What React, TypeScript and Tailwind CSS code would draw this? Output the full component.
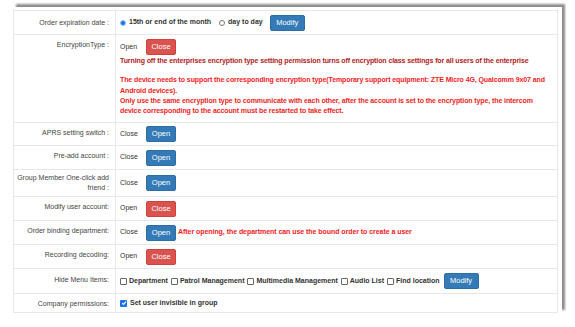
import React from 'react';

const font = { fontFamily: '"Liberation Sans", Arial, sans-serif' };

const Btn = ({ kind, children, w = 'w-[30px]' }: { kind: 'blue' | 'red'; children: React.ReactNode; w?: string }) => (
  <span
    className={`${w} h-[16px] inline-flex items-center justify-center rounded-[2px] text-white text-[7.5px] shrink-0 ${
      kind === 'blue' ? 'bg-[#337ab7] border border-[#2e6da4]' : 'bg-[#d9534f] border border-[#d43f3a]'
    }`}
  >
    {children}
  </span>
);

const Radio = ({ on }: { on?: boolean }) =>
  on ? (
    <span className="w-[6px] h-[6px] rounded-full bg-[#1a73e8] border border-[#9cc2f5] inline-block shrink-0" />
  ) : (
    <span className="w-[6px] h-[6px] rounded-full bg-white border border-[#777] inline-block shrink-0" />
  );

const Check = ({ on }: { on?: boolean }) =>
  on ? (
    <span className="w-[7px] h-[7px] rounded-[1px] bg-[#1a73e8] inline-flex items-center justify-center shrink-0">
      <svg width="6" height="6" viewBox="0 0 10 10">
        <path d="M2 5.2 L4.2 7.4 L8.2 2.6" stroke="white" strokeWidth="1.8" fill="none" />
      </svg>
    </span>
  ) : (
    <span className="w-[7px] h-[7px] rounded-[1px] bg-white border border-[#666] inline-block shrink-0" />
  );

const Row = ({
  label,
  h,
  lpt = 'pt-[6px]',
  children,
  top,
}: {
  label: React.ReactNode;
  h: string;
  lpt?: string;
  children: React.ReactNode;
  top?: boolean;
}) => (
  <div className={`flex border-b border-[#e8e8e8] ${h}`}>
    <div className={`w-[102px] shrink-0 border-r border-[#e8e8e8] text-right pr-[6px] text-[#444] leading-[10px] ${lpt}`}>
      {label}
    </div>
    <div className={`flex-1 pl-[4px] whitespace-nowrap ${top ? '' : 'flex items-center gap-[6px]'}`}>{children}</div>
  </div>
);

export default function App() {
  return (
    <div className="w-[575px] h-[327px] bg-white pl-[13px] pt-[7px] text-[7px]" style={font}>
      <div className="w-[549px] bg-white shadow-[3px_-3px_2px_rgba(0,0,0,0.45)] pt-[3px]">
        <div className="w-[545px] border-l border-t border-r border-[#e8e8e8] text-[#333]">
          <Row label="Order expiration date :" h="h-[24px]" lpt="pt-[7px]">
            <span className="flex items-center gap-[3px] font-bold">
              <Radio on />
              15th or end of the month
            </span>
            <span className="flex items-center gap-[3px] font-bold ml-[2px]">
              <Radio />
              day to day
            </span>
            <span className="ml-[1px]">
              <Btn kind="blue" w="w-[35px]">
                Modify
              </Btn>
            </span>
          </Row>
          <Row label="EncryptionType :" h="h-[88px]" lpt="pt-[5px]" top>
            <div className="flex items-center gap-[6px] mt-[4px]">
              <span className="w-[20px]">Open</span>
              <Btn kind="red">Close</Btn>
            </div>
            <div className="font-bold leading-[10.3px] mt-[1px] tracking-[-0.1px]">
              <div className="text-[#b01a1a]">
                Turning off the enterprises encryption type setting permission turns off encryption class settings for all users of the enterprise
              </div>
              <div className="h-[9px]" />
              <div className="text-[#f01c1c]">
                The device needs to support the corresponding encryption type(Temporary support equipment: ZTE Micro 4G, Qualcomm 9x07 and
                <br />
                Android devices).
              </div>
              <div className="text-[#f01c1c]">
                Only use the same encryption type to communicate with each other, after the account is set to the encryption type, the intercom
                <br />
                device corresponding to the account must be restarted to take effect.
              </div>
            </div>
          </Row>
          <Row label="APRS setting switch :" h="h-[23px]" lpt="pt-[5px]">
            <span className="w-[20px]">Close</span>
            <Btn kind="blue">Open</Btn>
          </Row>
          <Row label="Pre-add account :" h="h-[24px]" lpt="pt-[5px]">
            <span className="w-[20px]">Close</span>
            <Btn kind="blue">Open</Btn>
          </Row>
          <Row
            label={
              <>
                Group Member One-click add
                <br />
                friend :
              </>
            }
            h="h-[27px]"
            lpt="pt-[3px]"
          >
            <span className="w-[20px]">Close</span>
            <Btn kind="blue">Open</Btn>
          </Row>
          <Row label="Modify user account:" h="h-[24px]" lpt="pt-[5px]">
            <span className="w-[20px]">Open</span>
            <Btn kind="red">Close</Btn>
          </Row>
          <Row label="Order binding department:" h="h-[24px]" lpt="pt-[5px]">
            <span className="w-[20px]">Close</span>
            <Btn kind="blue">Open</Btn>
            <span className="font-bold text-[#f01c1c] -ml-[4px] tracking-[-0.05px]">
              After opening, the department can use the bound order to create a user
            </span>
          </Row>
          <Row label="Recording decoding:" h="h-[24px]" lpt="pt-[5px]">
            <span className="w-[20px]">Open</span>
            <Btn kind="red">Close</Btn>
          </Row>
          <Row label="Hide Menu Items:" h="h-[25px]" lpt="pt-[6px]">
            <span className="flex items-center gap-[2px] font-bold">
              <Check />
              Department
            </span>
            <span className="flex items-center gap-[2px] font-bold -ml-[3px]">
              <Check />
              Patrol Management
            </span>
            <span className="flex items-center gap-[2px] font-bold -ml-[3px]">
              <Check />
              Multimedia Management
            </span>
            <span className="flex items-center gap-[2px] font-bold -ml-[3px]">
              <Check />
              Audio List
            </span>
            <span className="flex items-center gap-[2px] font-bold -ml-[3px]">
              <Check />
              Find location
            </span>
            <span className="-ml-[2px]">
              <Btn kind="blue" w="w-[35px]">
                Modify
              </Btn>
            </span>
          </Row>
          <Row label="Company permissions:" h="h-[19px]" lpt="pt-[5px]">
            <span className="flex items-center gap-[3px] font-bold">
              <Check on />
              Set user invisible in group
            </span>
          </Row>
        </div>
      </div>
    </div>
  );
}
